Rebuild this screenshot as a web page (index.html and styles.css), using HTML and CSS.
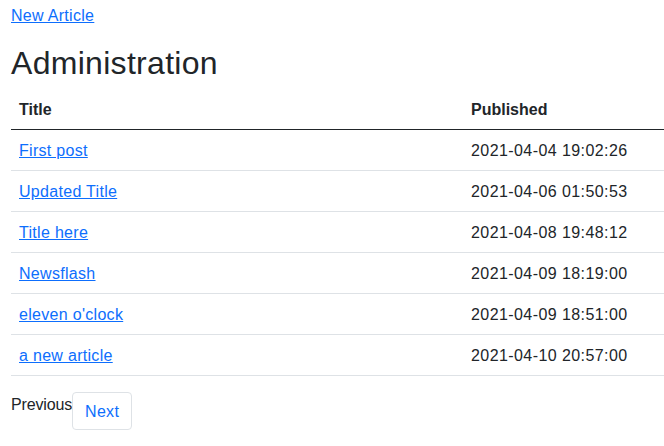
FILE: index.html
```html
<!DOCTYPE html>
<html>
<head>
<meta charset="utf-8">
<link rel="stylesheet" href="styles.css">
</head>
<body>
<div class="page">
  <p class="top"><a href="#">New Article</a></p>
  <h1>Administration</h1>
  <table class="table">
    <thead>
      <tr><th class="c1">Title</th><th>Published</th></tr>
    </thead>
    <tbody>
      <tr><td><a href="#">First post</a></td><td class="date">2021-04-04 19:02:26</td></tr>
      <tr><td><a href="#">Updated Title</a></td><td class="date">2021-04-06 01:50:53</td></tr>
      <tr><td><a href="#">Title here</a></td><td class="date">2021-04-08 19:48:12</td></tr>
      <tr><td><a href="#">Newsflash</a></td><td class="date">2021-04-09 18:19:00</td></tr>
      <tr><td><a href="#">eleven o'clock</a></td><td class="date">2021-04-09 18:51:00</td></tr>
      <tr><td><a href="#">a new article</a></td><td class="date">2021-04-10 20:57:00</td></tr>
    </tbody>
  </table>
  <ul class="pagination">
    <li class="prev">Previous</li>
    <li><a class="page-link" href="#">Next</a></li>
  </ul>
</div>
</body>
</html>
```
FILE: styles.css
```css
html, body { margin: 0; padding: 0; }
body {
  font-family: "Liberation Sans", Arial, sans-serif;
  font-size: 16px;
  line-height: 24px;
  color: #212529;
  background: #fff;
  letter-spacing: 0.3px;
}
a { color: #0d6efd; text-decoration: underline; }
.page { padding: 3px 0 0 11px; }
.top { margin: 0 0 15px; padding-top: 1px; }
h1 {
  margin: 0 0 7px;
  padding-top: 1px;
  font-size: 32px;
  font-weight: 500;
  line-height: 38.4px;
}
.table {
  width: 653px;
  border-collapse: collapse;
  margin-bottom: 16px;
}
.table th, .table td {
  text-align: left;
  padding: 9px 8px 7px;
  border-bottom: 1px solid #dee2e6;
}
.table th { font-weight: 700; border-bottom-color: #212529; letter-spacing: 0; }
.table .c1 { width: 436px; }
.table .date { letter-spacing: 0.42px; }
.pagination {
  display: flex;
  list-style: none;
  margin: 0;
  padding: 0;
}
.prev { color: #212529; letter-spacing: -0.15px; padding-top: 1px; }
.page-link {
  display: block;
  padding: 7px 12px 5px;
  border: 1px solid #dee2e6;
  border-radius: 4px;
  text-decoration: none;
  color: #0d6efd;
}
```
